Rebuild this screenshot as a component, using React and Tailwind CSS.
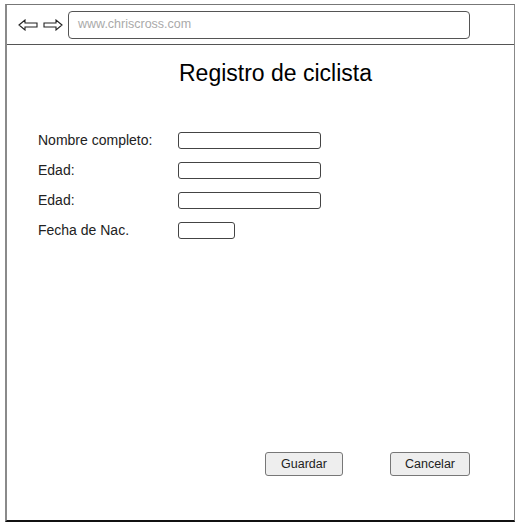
const fields = [
  { label: 'Nombre completo:', width: 'w-[143px]' },
  { label: 'Edad:', width: 'w-[143px]' },
  { label: 'Edad:', width: 'w-[143px]' },
  { label: 'Fecha de Nac.', width: 'w-[57px]' },
]

function Arrow({ flip }) {
  return (
    <svg width="20" height="12" viewBox="0 0 20 12" className={flip ? 'scale-x-[-1]' : ''}>
      <path d="M1 6 L7 1 L7 4 L19 4 L19 8 L7 8 L7 11 Z" fill="none" stroke="#222" strokeWidth="1.1" strokeLinejoin="miter" />
    </svg>
  )
}

export default function App() {
  return (
    <div className="w-[519px] h-[526px] bg-white pt-[4px] pl-[5px]" style={{ fontFamily: '"Liberation Sans", Arial, sans-serif' }}>
      <div className="w-[510px] h-[518px] flex flex-col border-l-2 border-l-[#8a8a8a] border-t border-t-[#777] border-r border-r-[#888] border-b-2 border-b-[#111]">

        {/* Browser bar */}
        <div className="h-[40px] flex items-center border-b border-b-[#555] pl-[11px]">
          <Arrow />
          <div className="ml-[5px]"><Arrow flip /></div>
          <div className="ml-[5px] w-[402px] h-[28px] border border-[#555] rounded-[4px] flex items-center pl-[9px] text-[12.5px] text-[#aaa]">
            www.chriscross.com
          </div>
        </div>

        <h1 className="text-center text-[23px] text-black mt-[14px] leading-[28px] pl-[30px]">Registro de ciclista</h1>

        <div className="mt-[45px] flex flex-col gap-[13px] pl-[31px]">
          {fields.map((f, i) => (
            <div key={i} className="flex items-center h-[17px]">
              <span className="w-[140px] text-[14px] text-[#222]">{f.label}</span>
              <div className={`${f.width} h-[17px] border border-[#444] rounded-[3px]`} />
            </div>
          ))}
        </div>

        <div className="flex-1" />

        <div className="flex justify-end gap-[47px] pr-[44px] mb-[44px]">
          <button className="w-[78px] h-[24px] bg-[#eee] border border-[#777] rounded-[3px] text-[12.5px] text-[#222]">Guardar</button>
          <button className="w-[80px] h-[24px] bg-[#eee] border border-[#777] rounded-[3px] text-[12.5px] text-[#222]">Cancelar</button>
        </div>
      </div>
    </div>
  )
}
